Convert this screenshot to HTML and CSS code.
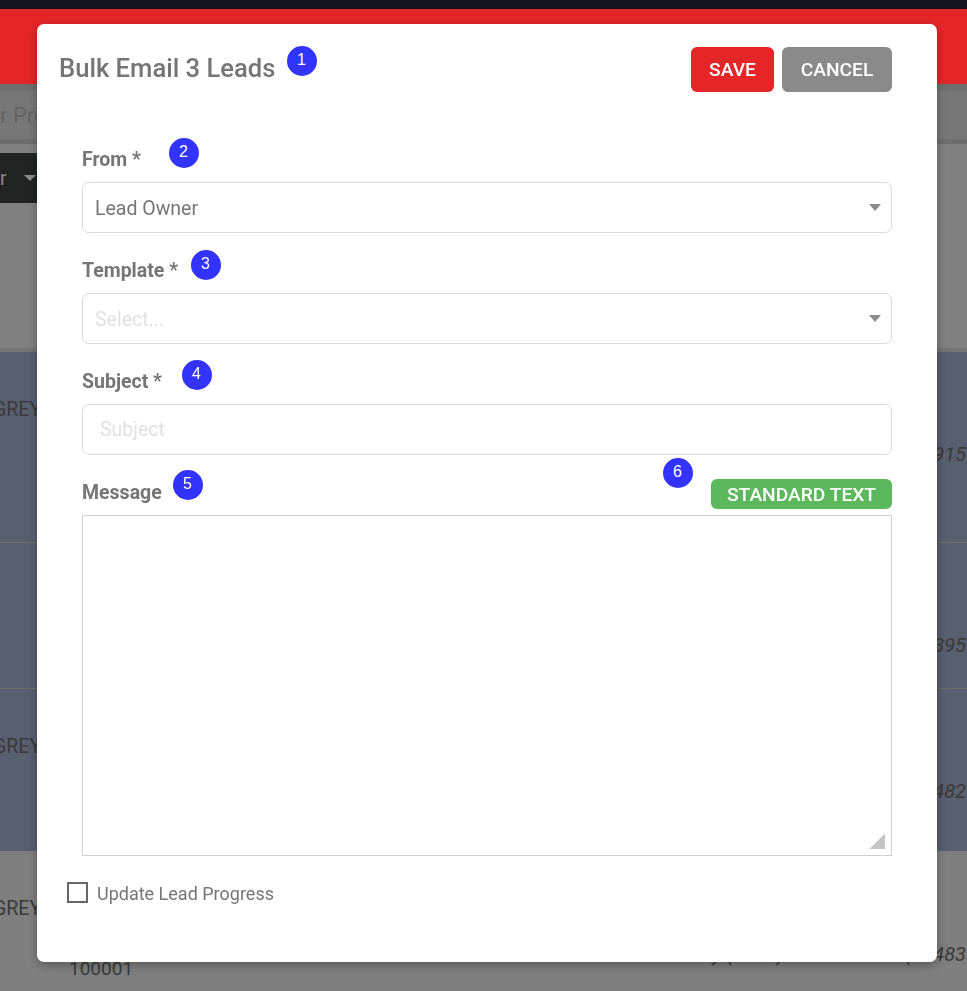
FILE: index.html
```html
<!DOCTYPE html>
<html lang="en">
<head>
    <meta charset="UTF-8"/>
    <meta name="viewport" content="width=device-width, initial-scale=1.0"/>
    <title>Bulk Email</title>
    <link rel="stylesheet" href="styles.css">
</head>
<body>
<div class="page">
    <div class="topbar"></div>
    <div class="header"></div>
    <div class="searchbar">
        <div class="search-box">r Pre</div>
    </div>
    <div class="filters">
        <div class="filter-btn"><span>r</span><span class="filter-caret"></span></div>
    </div>
    <div class="row row-a row-first">
        <span class="cell-name">GREY</span>
        <span class="cell-phone">0915</span>
    </div>
    <div class="row row-b">
        <span class="cell-phone">0395</span>
    </div>
    <div class="row row-c">
        <span class="cell-name">GREY</span>
        <span class="cell-phone">0482</span>
    </div>
    <div class="row row-d">
        <span class="cell-name">GREY</span>
        <div class="row-bottom">
            <span class="cell-code">100001</span>
            <span class="cell-phone">Day (0161) 4960000 Eve (01483</span>
        </div>
    </div>
</div>

<div class="modal">
    <div class="modal-head">
        <h2 class="modal-title">Bulk Email 3 Leads</h2>
        <div class="modal-actions">
            <button type="button" class="btn btn-save">SAVE</button>
            <button type="button" class="btn btn-cancel">CANCEL</button>
        </div>
    </div>

    <form class="modal-form">
        <div class="field">
            <label class="field-label">From *</label>
            <div class="select">
                <span>Lead Owner</span>
                <span class="select-caret"></span>
            </div>
        </div>
        <div class="field">
            <label class="field-label">Template *</label>
            <div class="select select-empty">
                <span>Select...</span>
                <span class="select-caret"></span>
            </div>
        </div>
        <div class="field">
            <label class="field-label">Subject *</label>
            <input class="text-input" type="text" placeholder="Subject"/>
        </div>
        <div class="field">
            <div class="message-head">
                <label class="field-label">Message</label>
                <button type="button" class="btn-standard">STANDARD TEXT</button>
            </div>
            <div class="message-box"><span class="resize-grip"></span></div>
        </div>
    </form>

    <div class="check-row">
        <span class="checkbox"></span>
        <span>Update Lead Progress</span>
    </div>

    <span class="marker marker-1">1</span>
    <span class="marker marker-2">2</span>
    <span class="marker marker-3">3</span>
    <span class="marker marker-4">4</span>
    <span class="marker marker-5">5</span>
    <span class="marker marker-6">6</span>
</div>
</body>
</html>
```

FILE: styles.css
```css
* {
    box-sizing: border-box;
}

html, body {
    margin: 0;
    height: 991px;
    overflow: hidden;
}

body {
    font-family: Roboto, "Liberation Sans", sans-serif;
    font-size: 18px;
    color: #757575;
    background: #7f7f7f;
    position: relative;
}

/* page behind the dialog */
.page {
    height: 991px;
    overflow: hidden;
    display: flex;
    flex-direction: column;
    color: #3a3a3a;
}

.topbar {
    height: 9px;
    background: #12121e;
}

.header {
    height: 75px;
    background: #e52629;
}

.searchbar {
    height: 60px;
    background: #6e6e6e;
    padding-top: 6px;
}

.search-box {
    height: 49px;
    background: #777;
    color: #636363;
    font-size: 22px;
    line-height: 52px;
}

.filters {
    height: 208px;
    background: #808080;
    padding-top: 9px;
    border-bottom: 4px solid #757575;
}

.filter-btn {
    width: 37px;
    height: 50px;
    background: #222423;
    color: #8a8a8a;
    font-size: 19.5px;
    display: flex;
    align-items: center;
    gap: 17px;
}

.filter-caret {
    border-left: 6px solid transparent;
    border-right: 6px solid transparent;
    border-top: 6px solid #8a8a8a;
}

.row {
    display: flex;
    flex-direction: column;
    border-bottom: 1px solid #6f6f66;
}

.row-a, .row-b, .row-c {
    background: #585f6e;
}

.row-first {
    height: 191px;
    padding-top: 47px;
}

.row-b {
    height: 146px;
    padding-top: 90px;
}

.row-c {
    height: 162px;
    padding-top: 47px;
    border-bottom: 0;
}

.row-d {
    flex: 1;
    padding-top: 47px;
    border-bottom: 0;
}

.cell-name {
    margin-left: -7px;
    font-size: 19.5px;
    line-height: 22px;
}

.cell-phone {
    font-style: italic;
    font-size: 20px;
    line-height: 24px;
    text-align: right;
    white-space: nowrap;
    padding-right: 1px;
}

.row-first .cell-phone {
    margin-top: 21px;
}

.row-c .cell-phone {
    margin-top: 21px;
}

.row-bottom {
    display: flex;
    justify-content: space-between;
    margin-top: 22px;
}

.cell-code {
    margin: 15px 0 0 69px;
    font-size: 19px;
}

/* dialog */
.modal {
    position: absolute;
    left: 37px;
    top: 24px;
    width: 900px;
    height: 938px;
    background: #fff;
    border-radius: 7px;
    box-shadow: 0 3px 10px rgba(0, 0, 0, 0.3);
    padding: 23px 45px 0 22px;
    transform: translateZ(0);
}

.modal-head {
    display: flex;
    justify-content: space-between;
    align-items: flex-start;
    height: 44px;
}

.modal-title {
    margin: 0;
    font-size: 25.6px;
    font-weight: 500;
    line-height: 42px;
    color: #757575;
}

.modal-actions {
    display: flex;
    gap: 8px;
}

.btn {
    height: 45px;
    border: 0;
    border-radius: 6px;
    color: #fff;
    font-family: inherit;
    font-size: 19.2px;
    font-weight: 500;
    padding: 0;
}

.btn-save {
    width: 83px;
    background: #e52629;
}

.btn-cancel {
    width: 110px;
    background: #8a8a8a;
}

.modal-form {
    margin: 57px 0 0 23px;
    display: flex;
    flex-direction: column;
}

.field-label {
    display: block;
    font-weight: 700;
    font-size: 19.5px;
    line-height: 23px;
    color: #757575;
    height: 23px;
    margin-bottom: 11px;
}

.field + .field {
    margin-top: 26px;
}

.select, .text-input {
    display: flex;
    align-items: center;
    justify-content: space-between;
    width: 100%;
    height: 51px;
    border: 1px solid #d9d9d9;
    border-radius: 7px;
    padding: 0 10px 0 12px;
    font-family: inherit;
    font-size: 19.5px;
    color: #757575;
    background: #fff;
}

.select span:first-child {
    margin-top: 2px;
}

.select-empty {
    color: #e0e0e0;
}

.select-caret {
    border-left: 6px solid transparent;
    border-right: 6px solid transparent;
    border-top: 7px solid #8a8a8a;
}

.text-input {
    padding-left: 17px;
    outline: none;
}

.text-input::placeholder {
    color: #e0e0e0;
    opacity: 1;
}

.message-head {
    display: flex;
    justify-content: space-between;
    align-items: flex-start;
    height: 34px;
}

.btn-standard {
    width: 181px;
    height: 30px;
    margin-top: -2px;
    border: 0;
    border-radius: 6px;
    background: #5cb85c;
    color: #fff;
    font-family: inherit;
    font-size: 19.2px;
    font-weight: 500;
    padding: 0;
}

.message-box {
    position: relative;
    height: 341px;
    border: 1px solid #cfcfcf;
}

.resize-grip {
    position: absolute;
    right: 6px;
    bottom: 6px;
    width: 15px;
    height: 15px;
    background: linear-gradient(135deg, transparent 50%, #c4c4c4 50%);
}

.check-row {
    display: flex;
    align-items: flex-start;
    gap: 9px;
    margin: 26px 0 0 8px;
    line-height: 23px;
}

.checkbox {
    width: 21px;
    height: 21px;
    border: 2px solid #666;
}

.marker {
    position: absolute;
    width: 30px;
    height: 30px;
    padding-right: 1px;
    border-radius: 50%;
    background: #3333ff;
    color: #fff;
    font-family: "Liberation Sans", Arial, sans-serif;
    font-size: 16px;
    line-height: 28px;
    text-align: center;
}

.marker-1 { left: 250px; top: 22px; }
.marker-2 { left: 132px; top: 114px; }
.marker-3 { left: 154px; top: 226px; }
.marker-4 { left: 145px; top: 336px; }
.marker-5 { left: 136px; top: 446px; }
.marker-6 { left: 626px; top: 434px; }
```
